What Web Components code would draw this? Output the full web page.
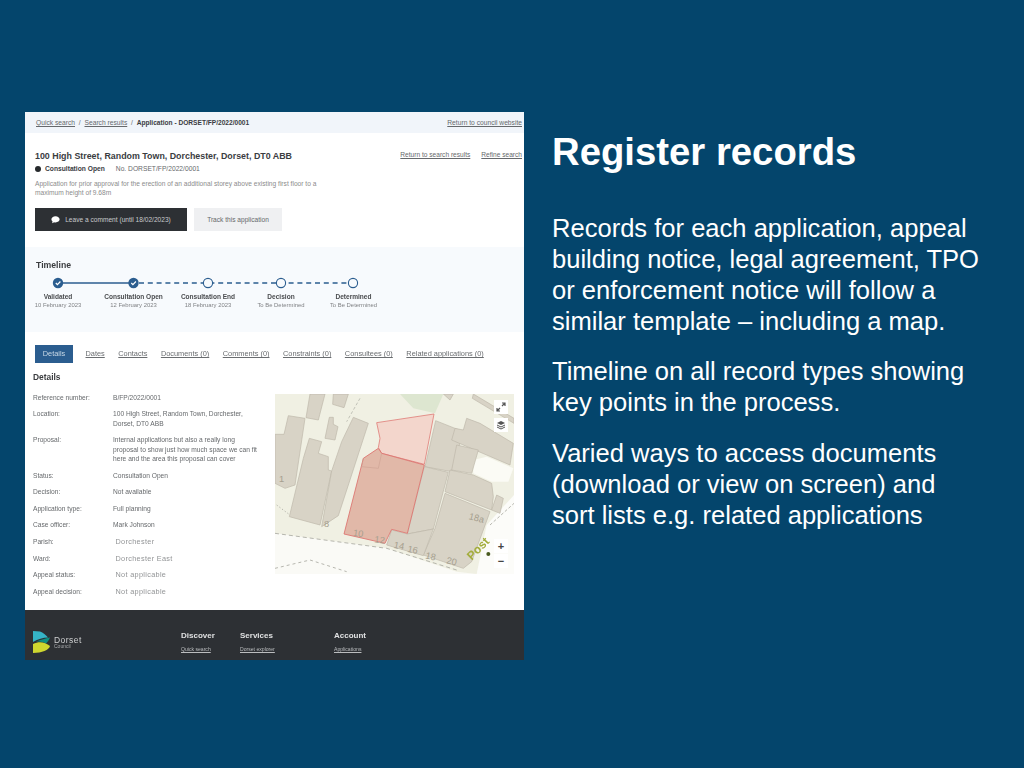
<!DOCTYPE html>
<html lang="en">
<head>
<meta charset="utf-8">
<title>Register records</title>
<style>
  html, body { margin: 0; padding: 0; background: #04456c; }
  body { font-family: "Liberation Sans", Arial, sans-serif; }
</style>
</head>
<body>
<slide-page>
  <record-shot slot="shot">
    <crumb-bar></crumb-bar>
    <app-header></app-header>
    <time-line></time-line>
    <tab-bar></tab-bar>
    <record-details></record-details>
    <site-footer></site-footer>
  </record-shot>
  <slide-notes slot="notes" heading="Register records">
    <p>Records for each application, appeal building notice, legal agreement, TPO or enforcement notice will follow a similar template – including a map.</p>
    <p>Timeline on all record types showing key points in the process.</p>
    <p>Varied ways to access documents (download or view on screen) and sort lists e.g. related applications</p>
  </slide-notes>
</slide-page>

<script>
class SlidePage extends HTMLElement {
  constructor() {
    super();
    this.attachShadow({ mode: 'open' });
    this.shadowRoot.innerHTML = `
      <style>
        :host { display: flex; width: 1024px; height: 768px; overflow: hidden; padding: 112px 0 0 25px; box-sizing: border-box; gap: 28px; align-items: flex-start; }
      </style>
      <slot name="shot"></slot>
      <slot name="notes"></slot>`;
  }
}

class RecordShot extends HTMLElement {
  constructor() {
    super();
    this.attachShadow({ mode: 'open' });
    this.shadowRoot.innerHTML = `
      <style>
        :host { display: block; width: 499px; height: 548px; flex: none; }
        .frame { display: flex; flex-direction: column; height: 100%; background: #fff; color: #3a3c3f; font-size: 7px; filter: blur(.5px); }
      </style>
      <div class="frame"><slot></slot></div>`;
  }
}

class CrumbBar extends HTMLElement {
  constructor() {
    super();
    this.attachShadow({ mode: 'open' });
    this.shadowRoot.innerHTML = `
      <style>
        :host { display: flex; align-items: center; height: 21px; padding: 0 2px 0 11px; background: #f1f5fa; color: #66696c; font-size: 6.7px; }
        a { color: inherit; text-decoration: underline; }
        span { margin: 0 3.800px; }
        b { color: #3a3c3f; font-size: 6.600px; }
        .end { margin-left: auto; }
      </style>
      <a>Quick search</a><span>/</span><a>Search results</a><span>/</span><b>Application - DORSET/FP/2022/0001</b>
      <a class="end">Return to council website</a>`;
  }
}

class AppHeader extends HTMLElement {
  constructor() {
    super();
    this.attachShadow({ mode: 'open' });
    this.shadowRoot.innerHTML = `
      <style>
        :host { display: block; height: 114px; padding: 17px 2px 0 10px; box-sizing: border-box; }
        .top { display: flex; justify-content: space-between; align-items: flex-start; height: 12px; }
        h1 { margin: 0; font-size: 8.870px; line-height: 12px; color: #3a3c3f; }
        .links { display: flex; gap: 11px; font-size: 6.600px; color: #66696c; line-height: 8px; padding-top: 1px; }
        .links a { text-decoration: underline; }
        .status { display: flex; align-items: center; height: 12px; font-size: 6.700px; color: #66696c; margin-top: 1px; }
        .dot { width: 6px; height: 6px; border-radius: 50%; background: #26292c; margin-right: 4px; }
        .status b { color: #3a3c3f; margin-right: 11px; }
        p { margin: 4px 0 0; width: 300px; font-size: 6.640px; line-height: 9.400px; color: #8c8c8c; }
        .actions { display: flex; gap: 7px; margin-top: 10px; }
        .btn { display: flex; align-items: center; justify-content: center; height: 23px; font-size: 6.600px; }
        .dark { width: 152px; background: #2d3034; color: #c8cacc; gap: 5px; }
        .light { width: 88px; background: #eff0f2; color: #66696c; }
        svg { width: 9px; height: 9px; }
      </style>
      <div class="top">
        <h1>100 High Street, Random Town, Dorchester, Dorset, DT0 ABB</h1>
        <div class="links"><a>Return to search results</a><a>Refine search</a></div>
      </div>
      <div class="status"><i class="dot"></i><b>Consultation Open</b>No. DORSET/FP/2022/0001</div>
      <p>Application for prior approval for the erection of an additional storey above existing first floor to a maximum height of 9.68m</p>
      <div class="actions">
        <div class="btn dark">
          <svg viewBox="0 0 24 24"><path fill="#fff" d="M12 3C5.900 3 1 6.800 1 11.500c0 2.300 1.200 4.400 3.100 5.900L3 22l5.400-2.700c1.100.3 2.300.5 3.600.5 6.100 0 11-3.800 11-8.300S18.100 3 12 3z"/></svg>
          Leave a comment (until 18/02/2023)
        </div>
        <div class="btn light">Track this application</div>
      </div>`;
  }
}

class TimeLine extends HTMLElement {
  constructor() {
    super();
    this.attachShadow({ mode: 'open' });
    const steps = [
      ['Validated', '10 February 2023', true],
      ['Consultation Open', '12 February 2023', true],
      ['Consultation End', '18 February 2023', false],
      ['Decision', 'To Be Determined', false],
      ['Determined', 'To Be Determined', false]
    ];
    const xs = [33, 108.500, 183, 256, 328];
    const nodes = xs.map((x, i) => steps[i][2]
      ? `<circle cx="${x}" cy="10" r="5.200" fill="#2b5d8f"/><path d="M${x - 2.2} 10l1.600 1.700 3-3.200" fill="none" stroke="#fff" stroke-width="1.200"/>`
      : `<circle cx="${x}" cy="10" r="4.600" fill="#f7fafd" stroke="#2b5d8f" stroke-width="1.100"/>`).join('');
    this.shadowRoot.innerHTML = `
      <style>
        :host { display: block; height: 85px; padding: 13px 0 0 11px; box-sizing: border-box; background: #f7fafd; }
        h2 { margin: 0; font-size: 8.700px; line-height: 11px; color: #3a3c3f; }
        svg { display: block; width: 360px; height: 20px; margin: 2px 0 0 -11px; }
        .labels { display: grid; grid-template-columns: 74px 77px 72px 74px 71px; margin-left: -15px; }
        .s { text-align: center; min-width: 0; }
        .s b { display: block; font-size: 6.550px; line-height: 8.500px; color: #4a4c4f; white-space: nowrap; }
        .s span { display: block; font-size: 5.900px; line-height: 9px; color: #808285; white-space: nowrap; }
      </style>
      <h2>Timeline</h2>
      <svg viewBox="0 0 360 20">
        <line x1="33" y1="10" x2="108" y2="10" stroke="#2b5d8f" stroke-width="1.400"/>
        <line x1="114" y1="10" x2="328" y2="10" stroke="#2b5d8f" stroke-width="1.300" stroke-dasharray="5 3.800"/>
        ${nodes}
      </svg>
      <div class="labels">${steps.map(s => `<div class="s"><b>${s[0]}</b><span>${s[1]}</span></div>`).join('')}</div>`;
  }
}

class TabBar extends HTMLElement {
  constructor() {
    super();
    this.attachShadow({ mode: 'open' });
    const tabs = ['Dates', 'Contacts', 'Documents (0)', 'Comments (0)', 'Constraints (0)', 'Consultees (0)', 'Related applications (0)'];
    this.shadowRoot.innerHTML = `
      <style>
        :host { display: flex; align-items: center; gap: 13.500px; height: 18px; margin: 13px 0 0 10px; font-size: 7.380px; color: #6a6d70; }
        .on { display: flex; align-items: center; justify-content: center; width: 38px; height: 18px; margin-right: -1px; background: #2b5d8f; color: #c9d8e6; }
        a { text-decoration: underline; }
      </style>
      <div class="on">Details</div>
      ${tabs.map(t => `<a>${t}</a>`).join('')}`;
  }
}

class RecordDetails extends HTMLElement {
  constructor() {
    super();
    this.attachShadow({ mode: 'open' });
    const rows = [
      ['Reference number:', 'B/FP/2022/0001'],
      ['Location:', '100 High Street, Random Town, Dorchester,<br>Dorset, DT0 ABB'],
      ['Proposal:', 'Internal applications but also a really long<br>proposal to show just how much space we can fit<br>here and the area this proposal can cover'],
      ['Status:', 'Consultation Open'],
      ['Decision:', 'Not available'],
      ['Application type:', 'Full planning'],
      ['Case officer:', 'Mark Johnson'],
      ['Parish:', 'Dorchester', 1],
      ['Ward:', 'Dorchester East', 1],
      ['Appeal status:', 'Not applicable', 1],
      ['Appeal decision:', 'Not applicable', 1]
    ];
    this.shadowRoot.innerHTML = `
      <style>
        :host { display: flex; height: 248px; box-sizing: border-box; padding: 9px 10px 0 8px; }
        .col { width: 242px; flex: none; }
        h3 { margin: 0 0 10px 0; font-size: 8.400px; line-height: 11px; color: #3a3c3f; }
        .row { display: grid; grid-template-columns: 80px 1fr; font-size: 6.650px; line-height: 9.400px; color: #66696c; margin-bottom: 7.200px; }
        .alt { display: block; margin: 1px 0 0 2.500px; color: #929496; font-size: 7.300px; letter-spacing: .32px; line-height: 8.400px; }
      </style>
      <div class="col">
        <h3>Details</h3>
        ${rows.map(r => `<div class="row"><div>${r[0]}</div><div>${r[2] ? `<span class="alt">${r[1]}</span>` : r[1]}</div></div>`).join('')}
      </div>
      <site-map></site-map>`;
  }
}

class SiteMap extends HTMLElement {
  constructor() {
    super();
    this.attachShadow({ mode: 'open' });
    this.shadowRoot.innerHTML = `
      <style>
        :host { display: block; position: relative; width: 239px; height: 180px; margin-top: 22px; flex: none; overflow: hidden; }
        svg.map { display: block; width: 239px; height: 180px; }
        .ctl { position: absolute; left: 219px; width: 14px; height: 14px; background: #fff; display: flex; align-items: center; justify-content: center; color: #444; font-size: 11px; line-height: 14px; font-weight: bold; }
        .ctl svg { width: 10px; height: 10px; }
      </style>
      <svg class="map" viewBox="15 27 717 540">
        <rect x="15" y="27" width="717" height="540" fill="#f0f0e3"/>
        <path d="M390 27h130l-25 58-65-15z" fill="#dde6d0"/>
        <path d="M15 445l335 45 210 70 60 7H15z" fill="#fafaf6"/>
        <path d="M732 330l-82 90-30 147h112z" fill="#fcfcf9"/>
        <path d="M610 225l40-10 80 35-15 40h-50l-55-25z" fill="#fbfbf5"/>
        <g fill="#d8d3c6" stroke="#bcb7a9" stroke-width="2">
          <path d="M15 148h27l13-56 50 8-30 200-30 10-30-15z"/>
          <path d="M120 27h45l-20 78-37-7z"/>
          <path d="M190 27h45l-13 41-34-10z"/>
          <path d="M178 97h12v21l14 7-9 40-30-5z"/>
          <path d="M118 160l37 10-10 35 30 10v40l10 3-35 162-92-25 42-175z"/>
          <path d="M250 97l45 18-60 185-30 92-50 33 30-167 30-88z"/>
          <path d="M497 107l83 33-35 120-80-15z"/>
          <path d="M590 100l40 15 100 60-10 65-175-75 10-35 25 5z"/>
          <path d="M560 180l65 15-20 70-60-10z"/>
          <path d="M540 255l70 15 55 25 5 40-5 40-140-55z"/>
          <path d="M463 245l72 17-45 170-78 15z"/>
          <path d="M525 325l135 55-55 150-25 20-120-40 35-80z"/>
          <path d="M365 435l47 12 78-15-30 80-110-32z"/>
          <path d="M680 330l20 10-10 45-25-10z"/>
          <path d="M520 27h30l-10 18z"/>
          <path d="M610 27l122 73v15l-125-75z"/>
        </g>
        <path d="M320 113l172-26-29 151-128-33-10-17 5-28z" fill="#f3d6cc" stroke="#e07f7b" stroke-width="2.500"/>
        <path d="M325 190l-45 30-58 227 123 28 20-42 47 12 51-205-128-35z" fill="#e1b8a8" stroke="#dc706c" stroke-width="2.500"/>
        <path d="M280 220l-5 25 50 5 10-45" fill="none" stroke="#c99d8e" stroke-width="1.500"/>
        <g fill="none" stroke="#a8a8a0" stroke-width="2.500">
          <path d="M15 445l335 45 210 65" stroke-dasharray="12 9"/>
          <path d="M20 360l40 30" stroke-dasharray="4 6"/>
          <path d="M15 550l105-25 110 35" stroke-dasharray="9 9"/>
          <path d="M270 40l-40 70" stroke-dasharray="9 6" stroke="#b8b9ae"/>
          <path d="M660 420l72-65" stroke-dasharray="9 6"/>
        </g>
        <g fill="#a69f8f" font-family="'Liberation Sans', sans-serif" font-size="28">
          <text x="27" y="290">1</text>
          <text x="162" y="425">8</text>
          <text x="248" y="452" transform="rotate(8 248 452)">10</text>
          <text x="312" y="472" transform="rotate(8 312 472)">12</text>
          <text x="370" y="488" transform="rotate(12 370 488)">14</text>
          <text x="411" y="500" transform="rotate(12 411 500)">16</text>
          <text x="465" y="520" transform="rotate(12 465 520)">18</text>
          <text x="528" y="535" transform="rotate(12 528 535)">20</text>
          <text x="595" y="402" transform="rotate(15 595 402)">18a</text>
        </g>
        <text x="605" y="527" fill="#a3ad3b" font-family="'Liberation Sans', sans-serif" font-size="36" font-weight="bold" transform="rotate(-45 605 527)">Post</text>
        <circle cx="655" cy="507" r="6" fill="#4a5a20"/>
      </svg>
      <div class="ctl" style="top:6px">
        <svg viewBox="0 0 10 10"><path d="M1.500 8.500l2.500-2.500M6 4l2.500-2.500M1 6v3h3M6 1h3v3" fill="none" stroke="#555" stroke-width="1.200"/></svg>
      </div>
      <div class="ctl" style="top:24px">
        <svg viewBox="0 0 10 10"><path d="M5 1l4 2-4 2-4-2z" fill="#555"/><path d="M1 5l4 2 4-2M1 7l4 2 4-2" fill="none" stroke="#555" stroke-width="1"/></svg>
      </div>
      <div class="ctl" style="top:145px">+</div>
      <div class="ctl" style="top:160px">−</div>`;
  }
}

class SiteFooter extends HTMLElement {
  constructor() {
    super();
    this.attachShadow({ mode: 'open' });
    this.shadowRoot.innerHTML = `
      <style>
        :host { display: grid; grid-template-columns: 148px 59px 94px 1fr; margin-top: auto; height: 50px; background: #2d3034; color: #e0e1e2; box-sizing: border-box; padding: 21px 0 0 8px; }
        .logo { display: flex; gap: 4px; }
        .logo svg { width: 17px; height: 22px; flex: none; }
        .name { font-size: 8.500px; line-height: 8px; margin-top: 5px; letter-spacing: .45px; color: #cfd0d1; }
        .name small { display: block; font-size: 5px; line-height: 5.500px; letter-spacing: 0; color: #a8aaac; }
        b { display: block; font-size: 8px; line-height: 10px; }
        a { display: block; margin-top: 5px; font-size: 5.100px; line-height: 6px; text-decoration: underline; color: #bbbdbf; }
      </style>
      <div class="logo">
        <svg viewBox="0 0 17 22">
          <path d="M0 0l7 .5c3 1 6 3.500 8 6-5 0-10 1.500-15 4.500z" fill="#35b4c6"/>
          <path d="M3 10.500c5-1.500 9-3.500 14-4-1 2.500-2.500 4.500-4 6-4-2-7-2-10-2z" fill="#0f8f80"/>
          <path d="M0 13c6-3 12-2 17 2-1 4-8 7-17 7z" fill="#cfd72f"/>
        </svg>
        <div class="name">Dorset<small>Council</small></div>
      </div>
      <div><b>Discover</b><a>Quick search</a></div>
      <div><b>Services</b><a>Dorset explorer</a></div>
      <div><b>Account</b><a>Applications</a></div>`;
  }
}

class SlideNotes extends HTMLElement {
  constructor() {
    super();
    this.attachShadow({ mode: 'open' });
    this.shadowRoot.innerHTML = `
      <style>
        :host { display: block; width: 430px; flex: none; color: #fff; }
        h2 { margin: 16px 0 37px; font-size: 38.300px; line-height: 48px; font-weight: bold; }
        ::slotted(p) { margin: 0 0 19.250px; font-size: 25.550px; line-height: 31px; }
      </style>
      <h2>${this.getAttribute('heading')}</h2>
      <slot></slot>`;
  }
}

customElements.define('slide-page', SlidePage);
customElements.define('record-shot', RecordShot);
customElements.define('crumb-bar', CrumbBar);
customElements.define('app-header', AppHeader);
customElements.define('time-line', TimeLine);
customElements.define('tab-bar', TabBar);
customElements.define('record-details', RecordDetails);
customElements.define('site-map', SiteMap);
customElements.define('site-footer', SiteFooter);
customElements.define('slide-notes', SlideNotes);
</script>
</body>
</html>
